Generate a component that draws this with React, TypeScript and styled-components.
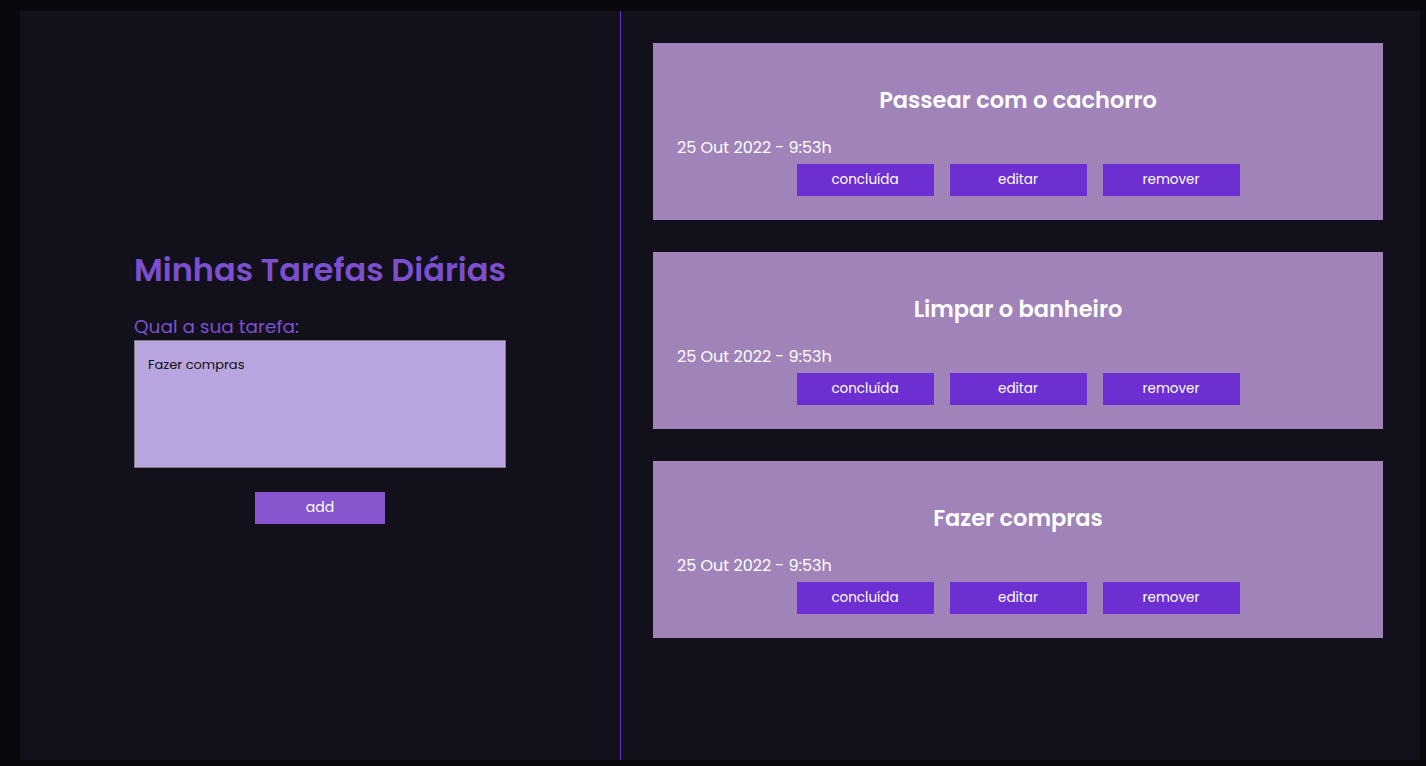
import React from "react";
import styled, { createGlobalStyle } from "styled-components";

const Global = createGlobalStyle`
  html, body { margin: 0; padding: 0; background: #09080c; }
  body { font-family: "Poppins", "Inter", "Noto Sans", sans-serif; }
  * { box-sizing: border-box; }
`;

const Page = styled.div`
  padding: 11px 6px 6px 20px;
  height: 766px;
  overflow: hidden;
`;

const Frame = styled.main`
  width: 1400px;
  height: 749px;
  background: #12101a;
  display: grid;
  grid-template-columns: 600px 1px 1fr;
`;

const FormPanel = styled.section`
  display: flex;
  align-items: center;
  justify-content: center;
`;

const Divider = styled.div`
  background: #6d2fd1;
`;

const Form = styled.div`
  width: 372px;
  display: flex;
  flex-direction: column;
  padding-top: 4px;
`;

const Title = styled.h1`
  margin: 0 0 28px;
  font-size: 32px;
  font-weight: 600;
  color: #7c4fcf;
  white-space: nowrap;
  line-height: 36px;
`;

const Label = styled.label`
  font-size: 18.5px;
  color: #7c4fcf;
  line-height: 22px;
  margin-bottom: 2px;
`;

const TextArea = styled.textarea`
  display: block;
  width: 372px;
  height: 128px;
  background: #b9a5df;
  border: 1px solid #7a7a7a;
  padding: 14px 13px;
  font-family: inherit;
  font-size: 13px;
  color: #111;
  resize: none;
  outline: none;
`;

const AddButton = styled.button`
  align-self: center;
  margin-top: 24px;
  width: 130px;
  height: 32px;
  border: none;
  background: #8755cd;
  color: #fff;
  font-family: inherit;
  font-size: 14px;
`;

const List = styled.section`
  padding: 32px 0 32px 32px;
  display: flex;
  flex-direction: column;
  gap: 32px;
`;

const Card = styled.article`
  width: 730px;
  height: 177px;
  background: #a083b9;
  display: flex;
  flex-direction: column;
  padding: 44px 24px 0;
`;

const CardTitle = styled.h2`
  margin: 0;
  text-align: center;
  color: #fff;
  font-size: 22.5px;
  font-weight: 600;
  line-height: 26px;
`;

const DateText = styled.p`
  margin: 25px 0 0;
  color: #fff;
  font-size: 16px;
  line-height: 20px;
`;

const Actions = styled.div`
  display: flex;
  justify-content: center;
  gap: 16px;
  margin-top: 6px;
`;

const ActionButton = styled.button`
  width: 137px;
  height: 32px;
  border: none;
  background: #6d2fd1;
  color: #fff;
  font-family: inherit;
  font-size: 13.5px;
`;

const tasks = ["Passear com o cachorro", "Limpar o banheiro", "Fazer compras"];

export default function App() {
  return (
    <>
      <Global />
      <Page>
        <Frame>
          <FormPanel>
            <Form>
              <Title>Minhas Tarefas Diárias</Title>
              <Label htmlFor="task">Qual a sua tarefa:</Label>
              <TextArea id="task" defaultValue="Fazer compras" />
              <AddButton>add</AddButton>
            </Form>
          </FormPanel>
          <Divider />
          <List>
            {tasks.map((t) => (
              <Card key={t}>
                <CardTitle>{t}</CardTitle>
                <DateText>25 Out 2022 - 9:53h</DateText>
                <Actions>
                  <ActionButton>concluída</ActionButton>
                  <ActionButton>editar</ActionButton>
                  <ActionButton>remover</ActionButton>
                </Actions>
              </Card>
            ))}
          </List>
        </Frame>
      </Page>
    </>
  );
}
